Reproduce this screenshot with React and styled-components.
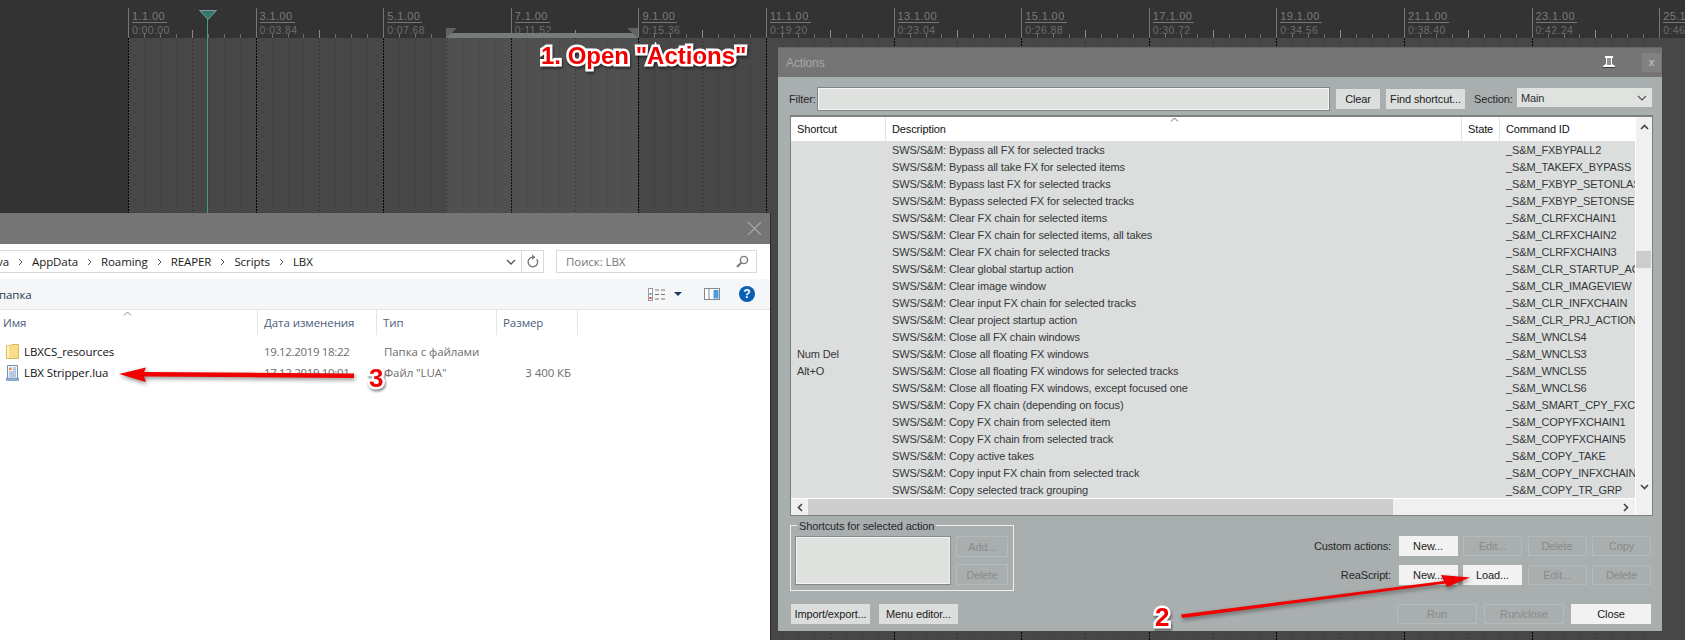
import React from 'react'
import styled, { createGlobalStyle } from 'styled-components'

const BEAT = 15.95
const BAR_COUNT = 13

const bars = [
  ['1.1.00', '0:00.00'], ['3.1.00', '0:03.84'], ['5.1.00', '0:07.68'], ['7.1.00', '0:11.52'],
  ['9.1.00', '0:15.36'], ['11.1.00', '0:19.20'], ['13.1.00', '0:23.04'], ['15.1.00', '0:26.88'],
  ['17.1.00', '0:30.72'], ['19.1.00', '0:34.56'], ['21.1.00', '0:38.40'], ['23.1.00', '0:42.24'],
  ['25.1.00', '0:46.08'],
]

const actions = [
  ['', 'Bypass all FX for selected tracks', '_S&M_FXBYPALL2'],
  ['', 'Bypass all take FX for selected items', '_S&M_TAKEFX_BYPASS'],
  ['', 'Bypass last FX for selected tracks', '_S&M_FXBYP_SETONLAST'],
  ['', 'Bypass selected FX for selected tracks', '_S&M_FXBYP_SETONSEL'],
  ['', 'Clear FX chain for selected items', '_S&M_CLRFXCHAIN1'],
  ['', 'Clear FX chain for selected items, all takes', '_S&M_CLRFXCHAIN2'],
  ['', 'Clear FX chain for selected tracks', '_S&M_CLRFXCHAIN3'],
  ['', 'Clear global startup action', '_S&M_CLR_STARTUP_ACTION'],
  ['', 'Clear image window', '_S&M_CLR_IMAGEVIEW'],
  ['', 'Clear input FX chain for selected tracks', '_S&M_CLR_INFXCHAIN'],
  ['', 'Clear project startup action', '_S&M_CLR_PRJ_ACTION'],
  ['', 'Close all FX chain windows', '_S&M_WNCLS4'],
  ['Num Del', 'Close all floating FX windows', '_S&M_WNCLS3'],
  ['Alt+O', 'Close all floating FX windows for selected tracks', '_S&M_WNCLS5'],
  ['', 'Close all floating FX windows, except focused one', '_S&M_WNCLS6'],
  ['', 'Copy FX chain (depending on focus)', '_S&M_SMART_CPY_FXCHAIN'],
  ['', 'Copy FX chain from selected item', '_S&M_COPYFXCHAIN1'],
  ['', 'Copy FX chain from selected track', '_S&M_COPYFXCHAIN5'],
  ['', 'Copy active takes', '_S&M_COPY_TAKE'],
  ['', 'Copy input FX chain from selected track', '_S&M_COPY_INFXCHAIN'],
  ['', 'Copy selected track grouping', '_S&M_COPY_TR_GRP'],
]

const crumbs = ['va', 'AppData', 'Roaming', 'REAPER', 'Scripts', 'LBX']

function RulerTicks() {
  const ticks = []
  for (let i = 0; i < 96; i++) {
    if (i % 8 === 0) continue
    const x = Math.round(i * BEAT) + 0.5
    const isBar = i % 4 === 0
    ticks.push(<line key={i} x1={x} x2={x} y1={isBar ? 30 : 34} y2={38} stroke={isBar ? '#8a8a8a' : '#6f6f6f'} />)
  }
  return <TickSvg width="1557" height="38">{ticks}</TickSvg>
}

function GridLines() {
  const lines = []
  for (let i = 0; i < 96; i++) {
    const x = Math.round(i * BEAT) + 0.5
    const major = i % 8 === 0
    const color = major ? '#000' : i % 4 === 0 ? '#222' : '#333'
    lines.push(<line key={i} x1={x} x2={x} y1={0} y2={602} stroke={color} strokeDasharray={major ? '2 1' : '1 3'} />)
  }
  return <TickSvg width="1557" height="602">{lines}</TickSvg>
}

function Timeline() {
  return (
    <TimelineWrap>
      <Sidebar />
      <TimelineMain>
        <Ruler>
          {bars.slice(0, BAR_COUNT).map(([bar, time]) => (
            <RulerCell key={bar}>
              <BarLabel>{bar}</BarLabel>
              <TimeLabel>{time}</TimeLabel>
            </RulerCell>
          ))}
          <RulerTicks />
          <LoopBar />
          <LoopMark $side="left" />
          <LoopMark $side="right" />
        </Ruler>
        <Arrange>
          <GridLines />
          <LoopRegion />
        </Arrange>
      </TimelineMain>
      <Playhead>
        <svg width="18" height="10" viewBox="0 0 18 10">
          <path d="M0.5 0.5H17.5L9 9.5Z" fill="#2f7a6b" stroke="#8b9a97" />
        </svg>
      </Playhead>
    </TimelineWrap>
  )
}

function ActionsWindow() {
  return (
    <ActionsWrap>
      <ActionsTitle>
        <span>Actions</span>
        <PinIcon width="14" height="13" viewBox="0 0 14 13">
          <path d="M3 0H11V2H10V8L13 10V11H1V10L4 8V2H3Z" fill="#fff" />
          <path d="M6 2V9M8 2V9" stroke="#222" />
          <path d="M1 11.5H13" stroke="#3a3a3a" />
        </PinIcon>
        <CloseBox>x</CloseBox>
      </ActionsTitle>
      <ActionsBody>
        <FilterRow>
          <FilterLabel>Filter:</FilterLabel>
          <FilterInput />
          <DlgButton $w={44}>Clear</DlgButton>
          <DlgButton $w={79}>Find shortcut...</DlgButton>
          <SectionLabel>Section:</SectionLabel>
          <SectionSelect>
            <span>Main</span>
            <svg width="10" height="6" viewBox="0 0 10 6"><path d="M1 1L5 5L9 1" fill="none" stroke="#555" strokeWidth="1.2" /></svg>
          </SectionSelect>
        </FilterRow>

        <ListFrame>
          <ListMain>
            <ListHeader>
              <HeadCell>Shortcut</HeadCell>
              <HeadCell>Description<SortCaret width="9" height="5" viewBox="0 0 9 5"><path d="M1 4.5L4.5 1L8 4.5" fill="none" stroke="#666" /></SortCaret></HeadCell>
              <HeadCell>State</HeadCell>
              <HeadCell>Command ID</HeadCell>
            </ListHeader>
            {actions.map(([key, desc, id]) => (
              <ListRow key={id}>
                <RowCell>{key}</RowCell>
                <RowCell>SWS/S&amp;M: {desc}</RowCell>
                <RowCell />
                <RowCell>{id}</RowCell>
              </ListRow>
            ))}
          </ListMain>
          <VScroll>
            <Chevron width="9" height="6" viewBox="0 0 9 6"><path d="M1 5L4.5 1.5L8 5" fill="none" stroke="#444" strokeWidth="1.6" /></Chevron>
            <VThumb />
            <Chevron width="9" height="6" viewBox="0 0 9 6"><path d="M1 1L4.5 4.5L8 1" fill="none" stroke="#444" strokeWidth="1.6" /></Chevron>
          </VScroll>
          <HScroll>
            <Chevron width="6" height="9" viewBox="0 0 6 9"><path d="M5 1L1.5 4.5L5 8" fill="none" stroke="#444" strokeWidth="1.6" /></Chevron>
            <HThumb />
            <Chevron width="6" height="9" viewBox="0 0 6 9"><path d="M1 1L4.5 4.5L1 8" fill="none" stroke="#444" strokeWidth="1.6" /></Chevron>
          </HScroll>
        </ListFrame>

        <LowerPanel>
          <GroupBox>
            <GroupLegend>Shortcuts for selected action</GroupLegend>
            <ShortcutBox />
            <GroupButtons>
              <DlgButton $w={52} $h={21} $kind="off">Add...</DlgButton>
              <DlgButton $w={52} $h={21} $kind="off">Delete</DlgButton>
            </GroupButtons>
          </GroupBox>
          <ScriptRows>
            <ScriptRow>
              <ScriptLabel>Custom actions:</ScriptLabel>
              <DlgButton $w={59} $kind="on">New...</DlgButton>
              <DlgButton $w={59} $kind="off">Edit...</DlgButton>
              <DlgButton $w={59} $kind="off">Delete</DlgButton>
              <DlgButton $w={59} $kind="off">Copy</DlgButton>
            </ScriptRow>
            <ScriptRow>
              <ScriptLabel>ReaScript:</ScriptLabel>
              <DlgButton $w={59} $kind="on">New...</DlgButton>
              <DlgButton $w={59} $kind="on">Load...</DlgButton>
              <DlgButton $w={59} $kind="off">Edit...</DlgButton>
              <DlgButton $w={59} $kind="off">Delete</DlgButton>
            </ScriptRow>
          </ScriptRows>
        </LowerPanel>

        <FooterRow>
          <FooterGroup $gap={9}>
            <DlgButton $w={79}>Import/export...</DlgButton>
            <DlgButton $w={79}>Menu editor...</DlgButton>
          </FooterGroup>
          <FooterGroup $gap={7}>
            <DlgButton $w={80} $kind="off">Run</DlgButton>
            <DlgButton $w={80} $kind="off">Run/close</DlgButton>
            <DlgButton $w={80} $kind="on">Close</DlgButton>
          </FooterGroup>
        </FooterRow>
      </ActionsBody>
    </ActionsWrap>
  )
}

function ExplorerWindow() {
  return (
    <ExplorerWrap>
      <ExplorerTitle>
        <svg width="15" height="15" viewBox="0 0 15 15"><path d="M1 1L14 14M14 1L1 14" stroke="#a6a6a6" strokeWidth="1.2" /></svg>
      </ExplorerTitle>
      <AddressRow>
        <AddressBox>
          <Crumbs>
            {crumbs.map((c, i) => (
              <React.Fragment key={c}>
                {i > 0 && <svg width="5" height="8" viewBox="0 0 5 8"><path d="M1 1L4 4L1 7" fill="none" stroke="#555" /></svg>}
                <span>{c}</span>
              </React.Fragment>
            ))}
          </Crumbs>
          <svg width="10" height="6" viewBox="0 0 10 6"><path d="M1 1L5 5L9 1" fill="none" stroke="#555" strokeWidth="1.3" /></svg>
          <RefreshBox>
            <svg width="13" height="15" viewBox="0 0 13 15">
              <path d="M10.8 5.2A4.8 4.8 0 1 1 7.5 3.2" fill="none" stroke="#777" strokeWidth="1.4" />
              <path d="M6 0.5L9.5 3.2L6 5.8Z" fill="#777" />
            </svg>
          </RefreshBox>
        </AddressBox>
        <SearchBox>
          <span>Поиск: LBX</span>
          <svg width="13" height="13" viewBox="0 0 13 13">
            <circle cx="8" cy="5" r="3.6" fill="none" stroke="#777" strokeWidth="1.4" />
            <path d="M5.4 7.6L1 12" stroke="#777" strokeWidth="2" />
          </svg>
        </SearchBox>
      </AddressRow>
      <ToolRow>
        <NewFolder>папка</NewFolder>
        <svg width="17" height="13" viewBox="0 0 17 13">
          <rect x="0.5" y="0.5" width="4" height="12" fill="#fff" stroke="#999" />
          <rect x="1.5" y="9" width="2" height="2" fill="#d33" />
          <rect x="1.5" y="5" width="2" height="2" fill="#59a" />
          <path d="M7 2H11M13 2H17M7 6.5H11M13 6.5H17M7 11H11M13 11H17" stroke="#777" />
        </svg>
        <CaretDown width="8" height="4" viewBox="0 0 8 4"><path d="M0 0H8L4 4Z" fill="#1f3a5f" /></CaretDown>
        <PaneIcon width="16" height="12" viewBox="0 0 16 12">
          <rect x="0.5" y="0.5" width="15" height="11" fill="#fff" stroke="#888" />
          <path d="M5 1V11" stroke="#888" />
          <rect x="9.5" y="2" width="5" height="8.5" fill="#4a9be6" />
        </PaneIcon>
        <HelpIcon>?</HelpIcon>
      </ToolRow>
      <FileHeader>
        <FileHeadCell>Имя<NameCaret width="9" height="5" viewBox="0 0 9 5"><path d="M1 4.5L4.5 1L8 4.5" fill="none" stroke="#888" /></NameCaret></FileHeadCell>
        <FileHeadCell>Дата изменения</FileHeadCell>
        <FileHeadCell>Тип</FileHeadCell>
        <FileHeadCell>Размер</FileHeadCell>
      </FileHeader>
      <FileList>
        <FileRow>
          <FileName>
            <svg width="13" height="15" viewBox="0 0 13 15">
              <path d="M0.5 1.5H4.5L6 0.5H12.5V14.5H0.5Z" fill="#f9dd8a" stroke="#d9b95a" />
              <path d="M2 1.5V14" stroke="#fff3c4" strokeWidth="2" />
            </svg>
            LBXCS_resources
          </FileName>
          <FileDate>19.12.2019 18:22</FileDate>
          <FileMeta>Папка с файлами</FileMeta>
          <FileMeta />
        </FileRow>
        <FileRow>
          <FileName>
            <svg width="13" height="16" viewBox="0 0 13 16">
              <path d="M1.5 0.5H11.5V13.5H1.5Z" fill="#f4f8fc" stroke="#6f8fb5" />
              <path d="M0.5 13H12.5V15.5H0.5Z" fill="#8fb0d4" stroke="#5f80a8" strokeWidth="0.6" />
              <path d="M3 3.5L5 2L6 5H3Z" fill="#e58a3c" />
              <path d="M7 3H10M7 5H10M3 7H10M3 9H10M3 11H10" stroke="#7f9cc0" />
            </svg>
            LBX Stripper.lua
          </FileName>
          <FileDate>17.12.2019 10:01</FileDate>
          <FileMeta>Файл "LUA"</FileMeta>
          <FileMeta $right>3 400 КБ</FileMeta>
        </FileRow>
      </FileList>
    </ExplorerWrap>
  )
}

function Annotations() {
  return (
    <>
      <ArrowLayer width="1685" height="640" viewBox="0 0 1685 640">
        <path d="M354 373.5L144 372L146 367.5L119 374L146 382L144 376.5L354 378Z" fill="#f00000" />
        <path d="M1181 614.5L1444 581L1441 575L1470 577.5L1447 587L1445.5 583.5L1182 618Z" fill="#f00000" />
      </ArrowLayer>
      <Callout $x={541} $y={42} $size={24}>1. Open "Actions"</Callout>
      <Callout $x={369} $y={364} $size={26}>3</Callout>
      <Callout $x={1155} $y={603} $size={26}>2</Callout>
    </>
  )
}

export default function App() {
  return (
    <Desktop>
      <GlobalStyle />
      <Timeline />
      <ActionsWindow />
      <ExplorerWindow />
      <Annotations />
    </Desktop>
  )
}

const GlobalStyle = createGlobalStyle`
  html, body { margin: 0; padding: 0; background: #333; overflow: hidden; }
`

const Desktop = styled.div`
  position: relative;
  width: 1685px;
  height: 640px;
  overflow: hidden;
  font-family: "Liberation Sans", Arial, sans-serif;
`

/* timeline behind the windows */
const TimelineWrap = styled.div`
  display: flex;
  height: 640px;
`
const Sidebar = styled.div`
  width: 128px;
  flex: none;
  background: #333;
`
const TimelineMain = styled.div`
  flex: 1;
  display: flex;
  flex-direction: column;
  min-width: 0;
`
const Ruler = styled.div`
  position: relative;
  display: flex;
  height: 38px;
  flex: none;
  background: #333;
  overflow: hidden;
`
const TickSvg = styled.svg`
  position: absolute;
  left: 0;
  top: 0;
  shape-rendering: crispEdges;
`
const RulerCell = styled.div`
  flex: none;
  width: 127.6px;
  box-sizing: border-box;
  margin-top: 8px;
  height: 30px;
  padding-left: 3px;
  border-left: 1px solid #777;
  color: #7a7a7a;
  font-size: 11px;
  letter-spacing: 0.4px;
`
const BarLabel = styled.div`
  display: inline-block;
  line-height: 12px;
  padding: 2px 2px 0 0;
  border-bottom: 1px solid #777;
  vertical-align: top;
`
const TimeLabel = styled.div`
  margin-top: 1px;
  line-height: 12px;
  color: #6c6c6c;
  font-size: 10.5px;
`
const LoopBar = styled.div`
  position: absolute;
  left: 318px;
  top: 33px;
  width: 192px;
  height: 5px;
  background: #767b7a;
`
const LoopMark = styled.div`
  position: absolute;
  top: 28px;
  ${p => (p.$side === 'left' ? 'left: 318px;' : 'left: 499px;')}
  width: 11px;
  height: 10px;
  background: #5f6463;
  clip-path: ${p => (p.$side === 'left' ? 'polygon(0 0, 100% 0, 0 100%)' : 'polygon(0 0, 100% 0, 100% 100%)')};
`
const Arrange = styled.div`
  position: relative;
  flex: 1;
  background: #474747;
`
const LoopRegion = styled.div`
  position: absolute;
  left: 318px;
  top: 0;
  width: 192px;
  bottom: 0;
  background: rgba(255, 255, 255, 0.05);
`
const Playhead = styled.div`
  position: absolute;
  left: 207px;
  top: 10px;
  bottom: 0;
  width: 1px;
  background: #3f9d8c;
  svg {
    position: absolute;
    left: -8px;
    top: 0;
  }
`

/* actions dialog */
const ActionsWrap = styled.div`
  position: absolute;
  left: 778px;
  top: 47px;
  width: 884px;
  height: 584px;
  display: flex;
  flex-direction: column;
  background: #a9aeae;
  color: #2c2e2e;
  font-size: 11px;
  letter-spacing: -0.12px;
`
const ActionsTitle = styled.div`
  height: 30px;
  flex: none;
  display: flex;
  align-items: center;
  padding-left: 8px;
  background: #757575;
  border-top: 1px solid #666;
  box-sizing: border-box;
  color: #a8a8a8;
  font-size: 12px;
`
const PinIcon = styled.svg`
  margin-left: auto;
  margin-right: 26px;
`
const CloseBox = styled.div`
  width: 19px;
  height: 19px;
  margin-right: 1px;
  background: #818181;
  color: #b5b5b5;
  font-size: 11px;
  font-weight: bold;
  line-height: 18px;
  text-align: center;
`
const ActionsBody = styled.div`
  flex: 1;
  padding: 11px 10px 0 11px;
  display: flex;
  flex-direction: column;
`
const FilterRow = styled.div`
  display: flex;
  align-items: center;
  height: 22px;
  gap: 6px;
`
const FieldLabel = styled.span`
  white-space: nowrap;
  color: #26282a;
`
const FilterLabel = styled(FieldLabel)`
  width: 29px;
  margin-right: -6px;
`
const SectionLabel = styled(FieldLabel)`
  width: 43px;
  margin: 0 -6px 0 3px;
`
const ScriptLabel = styled(FieldLabel)`
  margin-right: 2px;
`
const FilterInput = styled.div`
  width: 511px;
  height: 22px;
  margin-right: 1px;
  box-sizing: border-box;
  background: #dfe1df;
  border: 1px solid #f4f5f4;
  box-shadow: 0 0 0 1px #7f8484;
`
const DlgButton = styled.button`
  flex: none;
  width: ${p => p.$w}px;
  height: ${p => p.$h || 20}px;
  padding: 0;
  box-sizing: border-box;
  font: 11px "Liberation Sans", Arial, sans-serif;
  letter-spacing: -0.12px;
  border: 1px solid ${p => (p.$kind === 'off' ? '#b4b9b9' : 'transparent')};
  background: ${p => (p.$kind === 'off' ? '#a9aeae' : p.$kind === 'on' ? '#f1f2f1' : '#dcdedd')};
  color: ${p => (p.$kind === 'off' ? '#878c8c' : '#1b1b1b')};
`
const SectionSelect = styled.div`
  width: 135px;
  height: 19px;
  margin-top: -3px;
  padding: 0 5px 0 4px;
  box-sizing: border-box;
  display: flex;
  align-items: center;
  justify-content: space-between;
  background: #e0e2e0;
`
const ListFrame = styled.div`
  margin: 5px 0 0 1px;
  width: 863px;
  height: 401px;
  box-sizing: border-box;
  border: 1px solid #7b8080;
  border-top-width: 2px;
  display: grid;
  grid-template-columns: 844px 17px;
  grid-template-rows: 381px 17px;
  background: #f0f0f0;
`
const ListMain = styled.div`
  min-width: 0;
  overflow: hidden;
  background: #dcdedd;
`
const columns = '95px 576px 38px 135px'
const ListHeader = styled.div`
  display: grid;
  grid-template-columns: ${columns};
  height: 24px;
  background: #fff;
`
const HeadCell = styled.div`
  position: relative;
  padding-left: 6px;
  line-height: 24px;
  color: #111;
  border-right: 1px solid #e2e5e5;
  &:last-child { border-right: none; }
`
const SortCaret = styled.svg`
  position: absolute;
  left: 284px;
  top: 0;
`
const ListRow = styled.div`
  display: grid;
  grid-template-columns: ${columns};
  height: 17px;
  line-height: 19px;
  color: #34373a;
`
const RowCell = styled.div`
  padding-left: 6px;
  white-space: nowrap;
  overflow: hidden;
`
const VScroll = styled.div`
  position: relative;
  grid-column: 2;
  grid-row: 1 / span 2;
  display: flex;
  flex-direction: column;
  align-items: center;
  justify-content: space-between;
  padding: 7px 0 25px;
  border-left: 1px solid #fff;
  background: #f0f0f0;
`
const VThumb = styled.div`
  position: absolute;
  left: 0;
  top: 134px;
  width: 15px;
  height: 17px;
  background: #cdcdcd;
`
const HScroll = styled.div`
  grid-column: 1;
  grid-row: 2;
  display: flex;
  align-items: center;
  padding: 0 6px;
  background: #f0f0f0;
  border-top: 1px solid #fff;
`
const HThumb = styled.div`
  width: 585px;
  height: 100%;
  margin: 0 auto 0 5px;
  background: #cdcdcd;
`
const Chevron = styled.svg`
  flex: none;
`
const LowerPanel = styled.div`
  margin: 9px 1px 0 1px;
  display: flex;
  justify-content: space-between;
`
const GroupBox = styled.div`
  position: relative;
  width: 224px;
  height: 66px;
  box-sizing: border-box;
  padding: 11px 5px 0 5px;
  border: 1px solid #eef0ef;
  display: flex;
  gap: 6px;
`
const GroupLegend = styled.span`
  position: absolute;
  left: 6px;
  top: -6px;
  padding: 0 2px;
  background: #a9aeae;
  line-height: 13px;
  color: #26282a;
`
const ShortcutBox = styled.div`
  width: 155px;
  height: 47px;
  box-sizing: border-box;
  background: #dfe1df;
  border: 1px solid #f4f5f4;
  box-shadow: 0 0 0 1px #84898a;
`
const GroupButtons = styled.div`
  display: flex;
  flex-direction: column;
  gap: 7px;
  margin-top: -1px;
`
const ScriptRows = styled.div`
  padding-top: 11px;
  display: flex;
  flex-direction: column;
  gap: 9px;
`
const ScriptRow = styled.div`
  display: flex;
  align-items: center;
  justify-content: flex-end;
  gap: 5.5px;
`
const FooterRow = styled.div`
  margin: 13px 1px 0 2px;
  display: flex;
  justify-content: space-between;
`
const FooterGroup = styled.div`
  display: flex;
  gap: ${p => p.$gap}px;
`

/* explorer window */
const ExplorerWrap = styled.div`
  position: absolute;
  left: 0;
  top: 213px;
  width: 770px;
  height: 427px;
  display: flex;
  flex-direction: column;
  background: #fff;
  box-shadow: 1px 0 0 #2a2a2a;
  font-family: "Open Sans", "Noto Sans", sans-serif;
  font-size: 11.5px;
  letter-spacing: -0.08px;
  color: #1a1a1a;
`
const ExplorerTitle = styled.div`
  height: 31px;
  flex: none;
  display: flex;
  align-items: center;
  justify-content: flex-end;
  padding-right: 8px;
  background: #757575;
`
const AddressRow = styled.div`
  height: 35px;
  flex: none;
  display: flex;
  align-items: center;
  padding: 0 13px 0 0;
  justify-content: space-between;
`
const AddressBox = styled.div`
  width: 544px;
  height: 23px;
  box-sizing: border-box;
  border: 1px solid #d9d9d9;
  border-left: none;
  display: flex;
  align-items: center;
  justify-content: space-between;
  overflow: hidden;
`
const Crumbs = styled.div`
  display: flex;
  align-items: center;
  gap: 9px;
  margin-left: -3px;
  margin-right: auto;
  svg { flex: none; }
`
const RefreshBox = styled.div`
  width: 21px;
  height: 100%;
  margin-left: 5px;
  border-left: 1px solid #d9d9d9;
  display: flex;
  align-items: center;
  justify-content: center;
`
const SearchBox = styled.div`
  width: 201px;
  height: 23px;
  box-sizing: border-box;
  border: 1px solid #d9d9d9;
  display: flex;
  align-items: center;
  justify-content: space-between;
  padding: 0 7px 0 9px;
  color: #777;
`
const ToolRow = styled.div`
  height: 30px;
  flex: none;
  display: flex;
  align-items: center;
  background: #f5f6f7;
  border-bottom: 1px solid #e5e5e5;
  padding-right: 15px;
`
const NewFolder = styled.span`
  margin: 0 auto 0 -1px;
  color: #2b3a4d;
`
const CaretDown = styled.svg`
  margin-left: 9px;
`
const PaneIcon = styled.svg`
  margin-left: 22px;
`
const HelpIcon = styled.div`
  width: 16px;
  height: 16px;
  margin-left: 19px;
  border-radius: 50%;
  background: #0a5fb4;
  color: #fff;
  font: bold 12px/16px "Liberation Sans", Arial, sans-serif;
  text-align: center;
`
const fileColumns = '258px 119px 120px 81px'
const FileHeader = styled.div`
  height: 25px;
  flex: none;
  display: grid;
  grid-template-columns: ${fileColumns};
`
const FileHeadCell = styled.div`
  position: relative;
  padding-left: 6px;
  line-height: 25px;
  color: #4c607a;
  border-right: 1px solid #e5e5e5;
  &:first-child { padding-left: 3px; }
`
const NameCaret = styled.svg`
  position: absolute;
  left: 123px;
  top: 1px;
`
const FileList = styled.div`
  padding-top: 6px;
`
const FileRow = styled.div`
  display: grid;
  grid-template-columns: ${fileColumns};
  height: 21px;
  line-height: 21px;
  align-items: center;
`
const FileName = styled.div`
  display: flex;
  align-items: center;
  gap: 5px;
  padding-left: 6px;
  color: #111;
`
const FileMeta = styled.div`
  padding: 0 ${p => (p.$right ? '7px' : '0')} 0 7px;
  text-align: ${p => (p.$right ? 'right' : 'left')};
  color: #6d6d6d;
  white-space: nowrap;
`
const FileDate = styled(FileMeta)`
  padding-left: 6px;
  letter-spacing: -0.35px;
`

/* red annotations on top */
const ArrowLayer = styled.svg`
  position: absolute;
  left: 0;
  top: 0;
  filter: drop-shadow(1px 2px 2px rgba(0, 0, 0, 0.45));
  pointer-events: none;
`
const Callout = styled.div`
  position: absolute;
  left: ${p => p.$x}px;
  top: ${p => p.$y}px;
  font: bold ${p => p.$size}px/28px "Liberation Sans", Arial, sans-serif;
  color: #f00000;
  white-space: nowrap;
  -webkit-text-stroke: 5px #fff;
  paint-order: stroke fill;
  filter: drop-shadow(1px 2px 1px rgba(0, 0, 0, 0.45));
`
